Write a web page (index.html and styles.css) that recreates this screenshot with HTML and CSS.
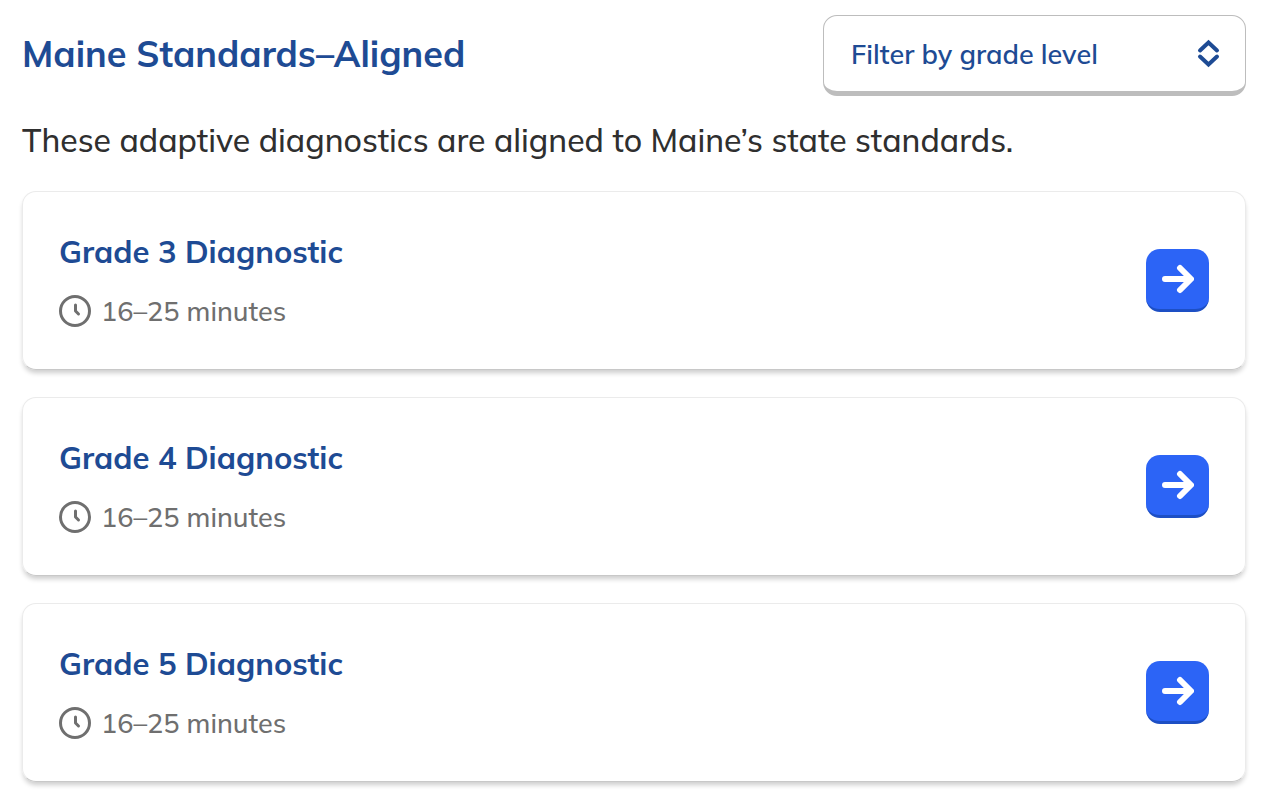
FILE: index.html
```
<!DOCTYPE html>
<html lang="en">
<head>
    <meta charset="UTF-8">
    <title>Maine Standards–Aligned Diagnostics</title>
    <link rel="stylesheet" href="styles.css">
</head>
<body>
    <main class="diagnostics">
        <header class="diagnostics-header">
            <h1>Maine Standards–Aligned</h1>
            <div class="grade-filter">
                <select id="gradeFilter" aria-label="Filter by grade level">
                    <option>Filter by grade level</option>
                    <option>Grade 3</option>
                    <option>Grade 4</option>
                    <option>Grade 5</option>
                </select>
                <svg class="filter-icon" viewBox="0 0 24 32" aria-hidden="true">
                    <path d="M3 12.500L11.500 4.500L20 12.500M3 18.500L11.500 26.500L20 18.500"/>
                </svg>
            </div>
        </header>
        <p class="intro">These adaptive diagnostics are aligned to Maine’s state standards.</p>

        <div class="card-list">
            <section class="card">
                <div class="card-info">
                    <h2>Grade 3 Diagnostic</h2>
                    <p class="duration">
                        <svg viewBox="0 0 32 32" aria-hidden="true"><circle cx="16" cy="16" r="14.5"/><path d="M16.500 10V16L19.500 19"/></svg>
                        16–25 minutes
                    </p>
                </div>
                <a href="#grade-3" class="start-button" aria-label="Start Grade 3 Diagnostic">
                    <svg viewBox="0 0 32 32" aria-hidden="true"><path d="M3 16H28M18 5L29 16L18 27"/></svg>
                </a>
            </section>
            <section class="card">
                <div class="card-info">
                    <h2>Grade 4 Diagnostic</h2>
                    <p class="duration">
                        <svg viewBox="0 0 32 32" aria-hidden="true"><circle cx="16" cy="16" r="14.5"/><path d="M16.500 10V16L19.500 19"/></svg>
                        16–25 minutes
                    </p>
                </div>
                <a href="#grade-4" class="start-button" aria-label="Start Grade 4 Diagnostic">
                    <svg viewBox="0 0 32 32" aria-hidden="true"><path d="M3 16H28M18 5L29 16L18 27"/></svg>
                </a>
            </section>
            <section class="card">
                <div class="card-info">
                    <h2>Grade 5 Diagnostic</h2>
                    <p class="duration">
                        <svg viewBox="0 0 32 32" aria-hidden="true"><circle cx="16" cy="16" r="14.5"/><path d="M16.500 10V16L19.500 19"/></svg>
                        16–25 minutes
                    </p>
                </div>
                <a href="#grade-5" class="start-button" aria-label="Start Grade 5 Diagnostic">
                    <svg viewBox="0 0 32 32" aria-hidden="true"><path d="M3 16H28M18 5L29 16L18 27"/></svg>
                </a>
            </section>
        </div>
    </main>
</body>
</html>
```
FILE: styles.css
```
* {
    margin: 0;
    padding: 0;
    box-sizing: border-box;
    font-family: 'Mulish', 'Lato', sans-serif;
}

body {
    background-color: #fff;
    color: #2f2f2f;
}

.diagnostics {
    padding: 15px 28px 20px 22px;
}

.diagnostics-header {
    display: flex;
    align-items: center;
    justify-content: space-between;
    gap: 24px;
}

.diagnostics-header h1 {
    padding-bottom: 3px;
    color: #1e4b94;
    font-size: 36px;
    line-height: 48px;
    font-weight: 700;
}

/* Grade filter */
.grade-filter {
    position: relative;
    flex: 0 1 423px;
}

.grade-filter select {
    appearance: none;
    width: 100%;
    height: 81px;
    padding: 0 64px 0 27px;
    border: 1px solid #bdbdbd;
    border-bottom-width: 5px;
    border-radius: 14px;
    background-color: #fff;
    color: #1e4b94;
    font-size: 27px;
    font-weight: 600;
    cursor: pointer;
}

.filter-icon {
    position: absolute;
    right: 25px;
    top: 23px;
    width: 24px;
    height: 32px;
    fill: none;
    stroke: #1e4b94;
    stroke-width: 4;
    stroke-linecap: round;
    stroke-linejoin: miter;
    pointer-events: none;
}

.intro {
    margin: 20px 0 27px;
    font-size: 32px;
    line-height: 48px;
    font-weight: 500;
}

/* Diagnostic cards */
.card-list {
    display: flex;
    flex-direction: column;
    gap: 27px;
}

.card {
    display: flex;
    align-items: center;
    justify-content: space-between;
    padding: 36px;
    border: 1px solid #ebebeb;
    border-bottom-color: #c8c8c8;
    border-radius: 14px;
    box-shadow: 0 4px 5px -1px rgba(0, 0, 0, 0.2);
}

.card h2 {
    color: #1e4b94;
    font-size: 31px;
    line-height: 48px;
    font-weight: 700;
}

.duration {
    display: flex;
    align-items: center;
    gap: 10px;
    margin-top: 13px;
    color: #6f6f6f;
    font-size: 27px;
    line-height: 44px;
    font-weight: 500;
}

.duration svg {
    width: 32px;
    height: 32px;
    fill: none;
    stroke: #6f6f6f;
    stroke-width: 3;
    stroke-linecap: round;
    stroke-linejoin: round;
}

.start-button {
    display: flex;
    align-items: center;
    justify-content: center;
    width: 63px;
    height: 63px;
    border-bottom: 3px solid #1d4fc4;
    border-radius: 14px;
    background-color: #2c64f6;
}

.start-button svg {
    width: 32px;
    height: 32px;
    fill: none;
    stroke: #fff;
    stroke-width: 6;
    stroke-linecap: round;
    stroke-linejoin: round;
}
```
